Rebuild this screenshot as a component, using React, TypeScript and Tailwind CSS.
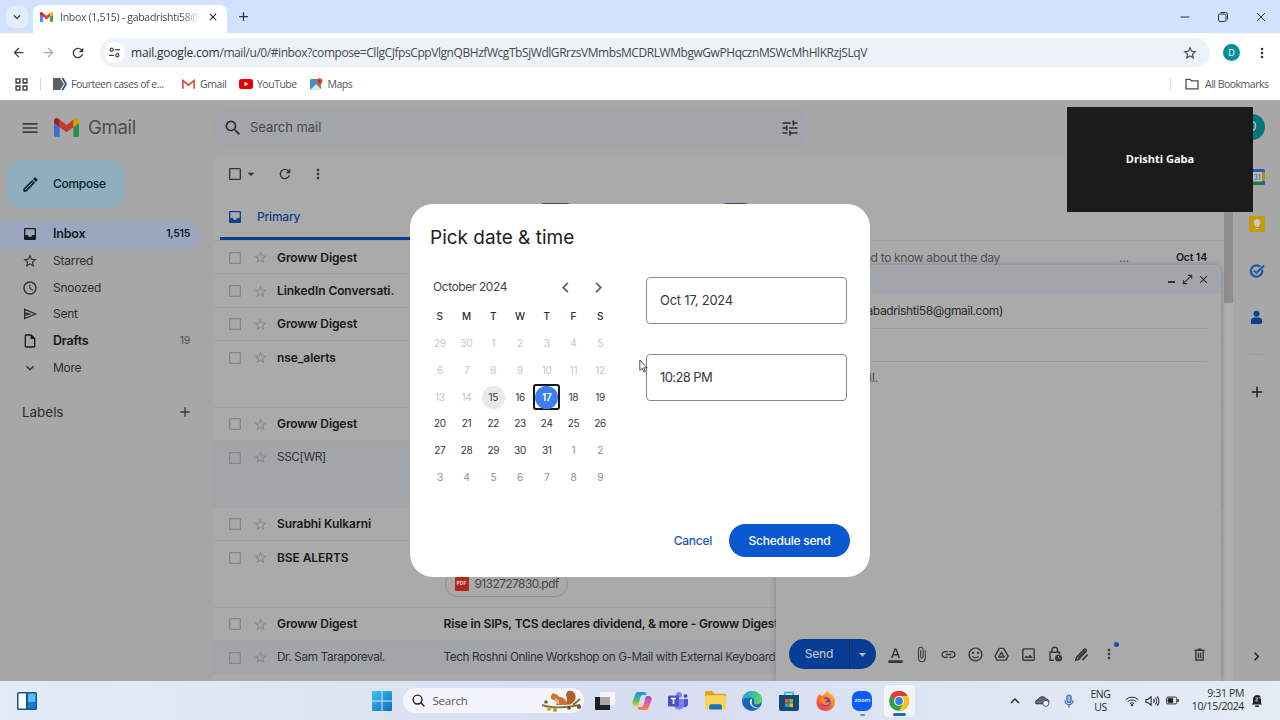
import type { ReactNode } from "react";
import {
  MdAccessTime,
  MdAdd,
  MdArrowBack,
  MdArrowDropDown,
  MdArrowForward,
  MdAttachFile,
  MdCheckBoxOutlineBlank,
  MdChevronLeft,
  MdChevronRight,
  MdClose,
  MdExpandMore,
  MdFormatColorText,
  MdInsertLink,
  MdMenu,
  MdMoreVert,
  MdOutlineImage,
  MdOutlineInsertDriveFile,
  MdOutlineModeEdit,
  MdRefresh,
  MdSearch,
  MdSentimentSatisfiedAlt,
  MdStarBorder,
  MdTune,
} from "react-icons/md";

const folders = [
  { name: "Inbox", count: "1,515", icon: InboxIcon, active: true, bold: true },
  { name: "Starred", count: "", icon: MdStarBorder, active: false, bold: false },
  { name: "Snoozed", count: "", icon: MdAccessTime, active: false, bold: false },
  { name: "Sent", count: "", icon: SentIcon, active: false, bold: false },
  { name: "Drafts", count: "19", icon: MdOutlineInsertDriveFile, active: false, bold: true },
  { name: "More", count: "", icon: MdExpandMore, active: false, bold: false },
];

type Mail = {
  from: string;
  unread: boolean;
  tall?: boolean;
  subject?: string;
  tail?: string;
  date?: string;
  file?: string;
};

const mails: Mail[] = [
  { from: "Groww Digest", unread: true, tail: "All you need to know about the day", date: "Oct 14" },
  { from: "LinkedIn Conversati.", unread: true },
  { from: "Groww Digest", unread: true },
  { from: "nse_alerts", unread: true, tall: true },
  { from: "Groww Digest", unread: true },
  { from: "SSC[WR]", unread: false, tall: true },
  { from: "Surabhi Kulkarni", unread: true },
  { from: "BSE ALERTS", unread: true, tall: true, file: "9132727830.pdf" },
  { from: "Groww Digest", unread: true, subject: "Rise in SIPs, TCS declares dividend, & more - Groww Digest" },
  { from: "Dr. Sam Taraporeval.", unread: false, subject: "Tech Roshni Online Workshop on G-Mail with External Keyboard" },
];

const weekDays = ["S", "M", "T", "W", "T", "F", "S"];
const days = [
  29, 30, 1, 2, 3, 4, 5, 6, 7, 8, 9, 10, 11, 12, 13, 14, 15, 16, 17, 18, 19, 20, 21, 22, 23, 24, 25, 26,
  27, 28, 29, 30, 31, 1, 2, 3, 4, 5, 6, 7, 8, 9,
];

function InboxIcon({ className }: { className?: string }) {
  return (
    <svg viewBox="0 0 24 24" className={className} fill="currentColor">
      <path d="M19 3H5a2 2 0 0 0-2 2v14a2 2 0 0 0 2 2h14a2 2 0 0 0 2-2V5a2 2 0 0 0-2-2zm0 10.500h-4a3 3 0 0 1-6 0H5V5h14z" />
    </svg>
  );
}

function SentIcon({ className }: { className?: string }) {
  return (
    <svg viewBox="0 0 24 24" className={className} fill="none" stroke="currentColor" strokeWidth="2">
      <path d="M4 5.2 20.2 12 4 18.8z M4 9.8l7 2.2-7 2.2" />
    </svg>
  );
}

function GmailLogo({ className }: { className: string }) {
  return (
    <svg viewBox="52 42 88 66" className={className}>
      <path fill="#4285f4" d="M58 108h14V74L52 59v43c0 3.320 2.690 6 6 6" />
      <path fill="#34a853" d="M120 108h14c3.320 0 6-2.690 6-6V59l-20 15" />
      <path fill="#fbbc04" d="M120 48v26l20-15v-8c0-7.420-8.470-11.650-14.400-7.200" />
      <path fill="#ea4335" d="M72 74V48l24 18 24-18v26L96 92" />
      <path fill="#c5221f" d="M52 51v8l20 15V48l-5.600-4.200c-5.940-4.450-14.400-.22-14.400 7.200" />
    </svg>
  );
}

function TabStrip() {
  return (
    <div className="flex h-[33px] bg-[#d3e2fc]">
      <div className="flex w-[33px] items-center justify-end">
        <div className="mr-[5px] flex size-[22px] items-center justify-center rounded-[7px] bg-[#e3edfd]">
          <MdExpandMore className="size-[14px] text-[#1f1f1f]" />
        </div>
      </div>
      <div className="mt-[5px] flex w-[194px] items-center rounded-t-[8px] bg-white pl-[7px] pb-[4px]">
        <GmailLogo className="h-[10px] w-[13px] shrink-0" />
        <span className="ml-[7px] w-[142px] whitespace-nowrap bg-linear-to-r from-[#3c4043] from-85% to-[#e8e8e8] to-97% bg-clip-text pt-px text-[10.500px] tracking-[-0.3px] text-transparent">
          Inbox (1,515) - gabadrishti58@
        </span>
        <MdClose className="ml-[5px] size-[12px] text-[#1f1f1f]" />
      </div>
      <MdAdd className="mt-[9px] ml-[9px] size-[15px] text-[#30343a]" />
      <div className="ml-auto flex items-center gap-[26px] pr-[13px]">
        <svg viewBox="0 0 12 12" className="size-[12px]" stroke="#333" fill="none">
          <path d="M1.500 6h9" />
        </svg>
        <svg viewBox="0 0 12 12" className="size-[12px]" stroke="#333" fill="none">
          <rect x="1.500" y="3" width="7.500" height="7.500" rx="1.500" />
          <path d="M3.500 1.500h5a2 2 0 0 1 2 2v5" />
        </svg>
        <svg viewBox="0 0 12 12" className="size-[12px]" stroke="#333" fill="none">
          <path d="m2 2 8 8M10 2l-8 8" />
        </svg>
      </div>
    </div>
  );
}

function AddressBar() {
  return (
    <div className="flex h-[39px] items-center bg-white">
      <MdArrowBack className="ml-[11px] size-[15px] text-[#3c4043]" />
      <MdArrowForward className="ml-[15px] size-[15px] text-[#a5a8ab]" />
      <MdRefresh className="ml-[14px] size-[16px] text-[#3c4043]" />
      <div className="ml-[14px] flex h-[29px] w-[1110px] items-center rounded-full bg-[#edf1f9] pl-[4px]">
        <div className="flex size-[21px] items-center justify-center rounded-full bg-white">
          <svg viewBox="0 0 14 14" className="size-[13px]" fill="none" stroke="#3c4043" strokeWidth="1.300">
            <circle cx="4" cy="4" r="1.700" />
            <path d="M7.500 4H13M1 10h5.500" />
            <circle cx="10" cy="10" r="1.700" />
          </svg>
        </div>
        <span className="ml-[6px] pt-px whitespace-nowrap text-[12px] tracking-[-0.440px] text-[#45484c]">
          <span className="tracking-[-0.2px] text-[#2b2d30]">mail.google.com</span>/mail/u/0/#inbox?compose=CllgCJfpsCppVlgnQBHzfWcgTbSjWdlGRrzsVMmbsMCDRLWMbgwGwPHqcznMSWcMhHlKRzjSLqV
        </span>
        <MdStarBorder className="mr-[12px] ml-auto size-[16px] text-[#3c4043]" />
      </div>
      <div className="ml-[13px] flex size-[17px] items-center justify-center rounded-full bg-[#0b8f95] text-[9px] text-white">D</div>
      <MdMoreVert className="ml-[14px] size-[16px] text-[#303134]" />
    </div>
  );
}

function Bookmarks() {
  return (
    <div className="flex h-[28px] items-center bg-white pb-[4px] text-[10.500px] tracking-[-0.5px] whitespace-nowrap text-[#53575b]">
      <svg viewBox="0 0 12 12" className="ml-[15px] size-[13px]" fill="none" stroke="#4a4d50" strokeWidth="1.400">
        <path d="M1 1h3.500v3.500H1zM7.500 1H11v3.500H7.500zM1 7.500h3.500V11H1zM7.500 7.500H11V11H7.500z" />
      </svg>
      <div className="ml-[12px] h-[13px] w-px bg-[#cbdcf8]" />
      <svg viewBox="0 0 14 12" className="ml-[12px] h-[12px] w-[14px]">
        <path fill="#5b6067" d="M0 0h7l4 6-4 6H0z" />
        <path fill="#1d4f8c" d="M8.500 0h2L14 6l-3.500 6h-2L12 6z" />
      </svg>
      <span className="ml-[4px] w-[93px] pt-px">Fourteen cases of e...</span>
      <svg viewBox="0 0 14 10" className="ml-[18px] h-[10px] w-[13px]" fill="none" stroke="#d9453d" strokeWidth="1.700">
        <path d="M1 10V1.200l6 5 6-5V10" />
      </svg>
      <span className="ml-[5px] w-[25px] pt-px tracking-[-0.4px]">Gmail</span>
      <svg viewBox="0 0 14 10" className="ml-[14px] h-[10px] w-[14px]">
        <rect width="14" height="10" rx="2.500" fill="#e60000" />
        <path fill="#fff" d="M5.500 2.700v4.600L9.500 5z" />
      </svg>
      <span className="ml-[4px] w-[39px] pt-px">YouTube</span>
      <svg viewBox="0 0 13 13" className="ml-[14px] size-[13px]">
        <rect y="1" width="11" height="11" rx="1.500" fill="#34a853" />
        <path d="M0 12 6 6l5 5v1z" fill="#dfe5ea" />
        <path d="m3 1 4 4-7 6V6z" fill="#4285f4" />
        <path d="M6.500 3.200a3 3 0 1 1 6 0c0 2-2.400 2.800-3 5.300-.6-2.500-3-3.300-3-5.300" fill="#ea4335" />
        <circle cx="9.500" cy="3.200" r="1" fill="#8c1d18" />
      </svg>
      <span className="ml-[4.500px] pt-px">Maps</span>
      <div className="ml-auto h-[13px] w-px bg-[#cbdcf8]" />
      <svg viewBox="0 0 14 12" className="ml-[14px] h-[12px] w-[14px]" fill="none" stroke="#4a4d50" strokeWidth="1.300">
        <path d="M1 1.300h4l1.500 1.500H13v8H1z" />
      </svg>
      <span className="mr-[12px] ml-[6px] w-[63px] pt-px">All Bookmarks</span>
    </div>
  );
}

function Sidebar() {
  return (
    <div className="flex w-[213px] shrink-0 flex-col text-[#2c2e31]">
      <div className="flex h-[55px] items-center">
        <MdMenu className="ml-[20px] size-[20px] text-[#3b3d40]" />
        <GmailLogo className="ml-[14px] h-[19px] w-[25px] brightness-[.85]" />
        <span className="ml-[9px] text-[18.500px] tracking-[-0.3px] text-[#4a4c4f]">Gmail</span>
      </div>
      <div className="mt-[6px] ml-[7px] flex h-[46px] w-[118px] items-center rounded-[12px] bg-[#8fafbe] text-[#0d1d2b]">
        <MdOutlineModeEdit className="ml-[14px] size-[19px]" />
        <span className="ml-[13px] text-[12px] font-medium tracking-[-0.3px]">Compose</span>
      </div>
      <div className="mt-[14px] flex w-[200px] flex-col">
        {folders.map((f) => (
          <div
            key={f.name}
            className={`flex h-[26.670px] items-center pr-[10px] ${f.active ? "rounded-r-full bg-[#9aa8bf] text-[#0d1726]" : ""} ${f.bold ? "text-[12.500px] font-semibold tracking-[-0.2px] text-[#17191c]" : "text-[12px] tracking-[-0.25px]"}`}
          >
            <f.icon className="ml-[22px] size-[16px]" />
            <span className="ml-[15px]">{f.name}</span>
            <span className={`ml-auto text-[10.500px] tracking-[-0.3px] ${f.active ? "" : "font-normal text-[#4c4e51]"}`}>{f.count}</span>
          </div>
        ))}
      </div>
      <div className="mt-[21px] flex w-[200px] items-center text-[13.500px] tracking-[-0.05px]">
        <span className="ml-[22px]">Labels</span>
        <MdAdd className="mr-[7px] ml-auto size-[16px] text-[#35373a]" />
      </div>
    </div>
  );
}

function MailRow({ mail }: { mail: Mail }) {
  return (
    <div
      className={`flex border-b border-[#a1a2a3] pl-[14px] ${mail.tall ? "h-[66.670px]" : "h-[33.330px]"} ${mail.unread ? "text-[12px] font-semibold tracking-[-0.08px] text-[#17181a]" : "bg-[#a3a6a9] text-[11.800px] tracking-[-0.4px] text-[#303235]"}`}
    >
      <div className="flex h-[33.500px] w-[216.500px] shrink-0 items-center">
        <MdCheckBoxOutlineBlank className="size-[16px] text-[#858789]" />
        <MdStarBorder className="ml-[9.500px] size-[15px] text-[#858789]" />
        <span className="ml-[9.500px] whitespace-nowrap">{mail.from}</span>
      </div>
      {mail.subject && (
        <div className={`flex h-[33.500px] items-center whitespace-nowrap ${mail.unread ? "tracking-[-0.15px]" : "tracking-[-0.42px]"}`}>
          {mail.subject}
        </div>
      )}
      {mail.file && (
        <div className="mt-[30px] ml-[1px] flex h-[26px] w-[123px] items-center rounded-full border border-[#8e9092] pl-[9px] font-normal text-[#46484b]">
          <span className="flex size-[14px] items-center justify-center rounded-[1px] bg-[#b3261e] text-[5px] font-bold tracking-normal text-[#ddd]">PDF</span>
          <span className="ml-[6px] text-[12px] tracking-[-0.6px]">{mail.file}</span>
        </div>
      )}
      {mail.tail && (
        <div className="ml-auto flex h-[33px] items-center font-normal tracking-[-0.32px] text-[#4a4c4f]">
          <span>{mail.tail}</span>
          <span className="ml-[119px] w-[57px] tracking-normal">...</span>
          <span className="mr-[17px] text-[10.500px] font-semibold tracking-[-0.15px] text-[#17181a]">{mail.date}</span>
        </div>
      )}
    </div>
  );
}

function MailList() {
  return (
    <div className="flex w-[1020px] shrink-0 flex-col">
      <div className="flex h-[55px] shrink-0 items-center">
        <div className="flex h-[38px] w-[597px] items-center rounded-full bg-[#a2a6aa]">
          <MdSearch className="ml-[10px] size-[20px] text-[#2c2e31]" />
          <span className="ml-[7px] text-[13px] tracking-[-0.05px] text-[#45484b]">Search mail</span>
          <MdTune className="mr-[10px] ml-auto size-[20px] text-[#2c2e31]" />
        </div>
      </div>
      <div className="flex min-h-0 flex-1">
        <div className="w-[1011px] shrink-0 overflow-hidden rounded-tl-[10px] bg-[#aaaaaa]">
          <div className="flex h-[38px] items-center text-[#333538]">
            <MdCheckBoxOutlineBlank className="ml-[14px] size-[16px]" />
            <MdArrowDropDown className="size-[16px]" />
            <MdRefresh className="ml-[18px] size-[16px]" />
            <MdMoreVert className="ml-[17px] size-[16px]" />
          </div>
          <div className="flex h-[48px] border-b border-[#a1a2a3]">
            <div className="ml-[7px] flex w-[200px] items-center border-b-3 border-[#0b3e8f] pt-[4px] text-[#123f8c]">
              <InboxIcon className="ml-[7px] size-[16px]" />
              <span className="ml-[14px] text-[12px] font-medium tracking-[-0.2px]">Primary</span>
            </div>
            <div className="mt-[10px] ml-[121px] h-[12px] w-[29px] rounded-[3px] bg-[#34506e]" />
            <div className="mt-[10px] ml-[153px] h-[12px] w-[25px] rounded-[3px] bg-[#2b4c8c]" />
          </div>
          {mails.map((m, i) => (
            <MailRow key={i} mail={m} />
          ))}
        </div>
        <div className="w-[9px] bg-[#aeaeaf]">
          <div className="h-[148px] bg-[#8e8e8f]" />
        </div>
      </div>
    </div>
  );
}

function AppRail() {
  return (
    <div className="flex flex-1 flex-col items-center text-[#1c1d1f]">
      <div className="mt-[14px] ml-[6px] flex size-[26px] items-center justify-center self-start rounded-full bg-[#05777c] text-[13px] text-[#ccc]">D</div>
      <svg viewBox="0 0 16 16" className="mt-[29px] size-[16px]">
        <rect width="16" height="16" rx="1.500" fill="#2c5cb0" />
        <path fill="#b88d0b" d="M12 3h4v9h-4z" />
        <path fill="#1f7a3c" d="M0 12h13v4H1.500z" />
        <path fill="#b9bcc0" d="M3 3h10v9.500H3z" />
        <text x="8" y="10.500" fontSize="7" textAnchor="middle" fill="#2c5cb0">31</text>
      </svg>
      <svg viewBox="0 0 16 16" className="mt-[31px] size-[16px]">
        <rect width="16" height="16" rx="1.500" fill="#c79a08" />
        <path fill="#c9c9c6" d="M8 3a3.500 3.500 0 0 0-1.700 6.500V11h3.400V9.500A3.500 3.500 0 0 0 8 3M6.500 12h3v1h-3z" />
      </svg>
      <svg viewBox="0 0 16 16" className="mt-[31px] size-[16px]" fill="none">
        <circle cx="7.500" cy="8" r="5.700" stroke="#1c57ad" strokeWidth="2.300" />
        <path d="m5 7.500 2.400 2.400 6.800-7" stroke="#a7a9ac" strokeWidth="3.500" />
        <path d="m5 7.500 2.400 2.400L15 2.500" stroke="#1c57ad" strokeWidth="2" />
      </svg>
      <svg viewBox="0 0 14 16" className="mt-[31px] h-[15px] w-[13px]" fill="#0c3f93">
        <circle cx="7" cy="4" r="3.200" />
        <path d="M1 15v-3a4 4 0 0 1 4-4h4a4 4 0 0 1 4 4v1.500a1.500 1.500 0 0 1-1.500 1.500z" />
      </svg>
      <div className="mt-[29px] h-px w-[14px] bg-[#999b9e]" />
      <MdAdd className="mt-[28px] size-[18px]" />
      <MdChevronRight className="mt-auto mb-[16px] size-[17px]" />
    </div>
  );
}

function ToolIcon({ children }: { children: ReactNode }) {
  return <div className="relative flex w-[26.670px] items-center justify-center">{children}</div>;
}

function ComposeWindow() {
  return (
    <div className="absolute top-[165px] left-[776px] flex h-[416px] w-[445px] flex-col rounded-t-[7px] bg-[#aaaaaa] text-[#2a2c2e] shadow-[0_0_6px_#808285]">
      <div className="flex h-[29px] items-center justify-end rounded-t-[7px] bg-[#a2a6aa] pr-[11px] pb-px">
        <div className="mt-[5px] h-[2px] w-[7px] bg-[#333]" />
        <svg viewBox="0 0 12 12" className="ml-[7px] size-[11px]" stroke="#333" strokeWidth="1.300" fill="none">
          <path d="m2 10 8-8M6.500 1.500h4v4M1.500 6.500v4h4" />
        </svg>
        <MdClose className="ml-[4px] size-[13px] text-[#333]" />
      </div>
      <div className="mx-[14px] flex h-[35px] items-center border-b border-[#9a9b9d] text-[12px] tracking-[-0.38px]">
        <span className="w-[213px] whitespace-nowrap text-right">Drishti (gabadrishti58@gmail.com)</span>
      </div>
      <div className="mx-[14px] h-[33px] border-b border-[#9a9b9d]" />
      <div className="mx-[14px] mt-[8px] flex-1 text-[11.500px] text-[#404244]">
        <div className="w-[88px] text-right whitespace-nowrap">Scheduled mail.</div>
      </div>
      <div className="mb-[12px] flex h-[30px] items-center pl-[13px]">
        <div className="flex h-[30px] w-[87px] shrink-0 items-center rounded-full bg-[#073d94] text-[12px] font-medium tracking-[-0.2px] text-[#b4bccb]">
          <span className="w-[60px] text-center">Send</span>
          <div className="flex h-full flex-1 items-center border-l border-[#0a2c66] pl-[4px]">
            <MdArrowDropDown className="size-[17px]" />
          </div>
        </div>
        <div className="ml-[6px] flex flex-1 items-center text-[#36383a]">
          <ToolIcon><MdFormatColorText className="size-[17px]" /></ToolIcon>
          <ToolIcon><MdAttachFile className="size-[17px]" /></ToolIcon>
          <ToolIcon><MdInsertLink className="size-[17px]" /></ToolIcon>
          <ToolIcon><MdSentimentSatisfiedAlt className="size-[17px]" /></ToolIcon>
          <ToolIcon>
            <svg viewBox="0 0 16 16" className="size-[15px]" fill="none" stroke="currentColor" strokeWidth="1.500" strokeLinejoin="round">
              <path d="M5.700 1.500h4.600L15 9.700 12.700 14H3.300L1 9.700z" />
              <path d="m8 5.700 2.900 4.900H5.100z" />
            </svg>
          </ToolIcon>
          <ToolIcon><MdOutlineImage className="size-[17px]" /></ToolIcon>
          <ToolIcon>
            <svg viewBox="0 0 16 16" className="size-[16px]" fill="none" stroke="currentColor" strokeWidth="1.500">
              <path d="M7 14.200H3V6.300h9.500V8M5 6V4a2.700 2.700 0 0 1 5.500 0v2" />
              <circle cx="11.500" cy="12" r="3.500" fill="currentColor" stroke="none" />
              <path d="M11.500 10v2l1.300.8" stroke="#ababab" strokeWidth=".9" />
            </svg>
          </ToolIcon>
          <ToolIcon>
            <svg viewBox="0 0 16 16" className="size-[15px]" fill="none" stroke="currentColor" strokeWidth="1.700">
              <path d="M2 14l.7-3L11 2.500c1-.9 2.800.8 1.900 1.900L5 13z" />
              <path d="M4.500 11.500 12 4M9 14l5.500-6" />
            </svg>
          </ToolIcon>
          <ToolIcon>
            <MdMoreVert className="size-[16px]" />
            <span className="absolute -top-[4px] right-[3px] size-[5px] rounded-full bg-[#174fa8]" />
          </ToolIcon>
          <svg viewBox="0 0 12 14" className="mr-[16px] ml-auto h-[13px] w-[11px]" fill="none" stroke="currentColor" strokeWidth="1.500">
            <path d="M.5 2.300h11M4 1.200h4M2 3v10h8V3M4.800 5v6M7.200 5v6" />
          </svg>
        </div>
      </div>
    </div>
  );
}

function Calendar() {
  const dayClass = (i: number) => {
    if (i === 18) return "text-white font-semibold";
    if (i < 16) return "text-[#c4c6c8]";
    if (i > 32) return "text-[#8d9093]";
    return "text-[#333538]";
  };
  return (
    <div className="w-[187px]">
      <div className="flex h-[27px] items-center pl-[6.500px] text-[12px] tracking-[-0.42px] text-[#444749]">
        <span className="pb-px">October 2024</span>
        <MdChevronLeft className="ml-auto size-[21px] text-[#5b5e61]" />
        <MdChevronRight className="mr-[5px] ml-[12px] size-[21px] text-[#5b5e61]" />
      </div>
      <div className="mt-[3px] grid grid-cols-7 text-[10px]">
        {weekDays.map((d, i) => (
          <div key={i} className="flex h-[26.670px] items-center justify-center pb-px font-medium text-[#2b2d30]">{d}</div>
        ))}
        {days.map((d, i) => (
          <div
            key={i}
            className={`flex h-[26.670px] items-center justify-center tracking-[-0.3px] ${dayClass(i)} ${i === 18 ? "rounded-[3px] border-2 border-[#15171a]" : ""}`}
          >
            <span
              className={`flex size-[23px] shrink-0 items-center justify-center rounded-full ${i === 18 ? "bg-[#3d7ff0]" : ""} ${i === 16 ? "bg-[#e9e9e9]" : ""}`}
            >
              {d}
            </span>
          </div>
        ))}
      </div>
    </div>
  );
}

function ScheduleDialog() {
  return (
    <div className="absolute top-[104px] left-[410px] flex h-[373px] w-[460px] flex-col rounded-[23px] bg-white">
      <h2 className="mt-[21px] ml-[20px] text-[19px] leading-[26px] text-[#1f2124]">Pick date &amp; time</h2>
      <div className="flex">
        <div className="mt-[22.800px] ml-[16.500px]">
          <Calendar />
        </div>
        <div className="mt-[26px] ml-[32.500px] flex flex-col gap-[30px] text-[13px] tracking-[-0.25px] text-[#36383b]">
          <div className="flex h-[47px] w-[201px] items-center rounded-[4px] border border-[#868a8e] pl-[13px]">Oct 17, 2024</div>
          <div className="flex h-[47px] w-[201px] items-center rounded-[4px] border border-[#868a8e] pl-[13px] tracking-[-0.6px]">10:28 PM</div>
        </div>
      </div>
      <div className="mt-auto mr-[20px] mb-[20px] flex items-center justify-end pt-[1px] text-[12px] font-medium tracking-[-0.25px]">
        <span className="mr-[17px] text-[#1a56b8]">Cancel</span>
        <button className="h-[33px] w-[121px] rounded-full bg-[#0b57d0] pt-px text-white">Schedule send</button>
      </div>
    </div>
  );
}

function TaskItem({ children }: { children: ReactNode }) {
  return <div className="relative flex h-full w-[36.800px] items-center justify-center">{children}</div>;
}

function Taskbar() {
  return (
    <div className="flex h-[39px] items-center bg-linear-to-r from-[#e2ecf6] via-[#d7ddf1] via-50% to-[#e4edf6] text-[#27292c]">
      <svg viewBox="0 0 20 18" className="ml-[17px] h-[18px] w-[20px]">
        <rect width="20" height="18" rx="1.500" fill="#14578f" />
        <path fill="#fff" d="M1.500 1.500H9v15H1.500z" />
        <path fill="#4cc0f5" d="M11 1.500h7.500V10H11z" />
        <path fill="#1779cf" d="M11 10h7.500v6.500H11z" />
      </svg>
      <svg viewBox="0 0 20 20" className="ml-[335px] size-[20px]">
        <defs>
          <linearGradient id="win" x1="0" y1="0" x2="1" y2="1">
            <stop offset="0" stopColor="#3fc0f0" />
            <stop offset="1" stopColor="#0b6fc4" />
          </linearGradient>
        </defs>
        <path fill="url(#win)" d="M1 0h8.500v9.500H0V1a1 1 0 0 1 1-1m9.500 0H19a1 1 0 0 1 1 1v8.500h-9.500zM0 10.500h9.500V20H1a1 1 0 0 1-1-1zm10.500 0H20V19a1 1 0 0 1-1 1h-8.500z" />
      </svg>
      <div className="ml-[11px] flex h-[25px] w-[181px] items-center rounded-full bg-[#f2f6fc] text-[11.500px] tracking-[-0.2px] text-[#54575b]">
        <svg viewBox="0 0 14 14" className="ml-[9px] size-[13px]" fill="none" stroke="#1f2124" strokeWidth="1.500">
          <circle cx="6" cy="6" r="4.800" />
          <path d="m9.500 9.500 3.800 3.800" />
        </svg>
        <span className="ml-[7.500px]">Search</span>
        <svg viewBox="0 0 42 22" className="mr-[1px] ml-auto h-[22px] w-[42px]">
          <path d="M1 15c8 3 22 3 38 0M32 15l7-6" stroke="#6f7d3c" strokeWidth="2" fill="none" />
          <path d="M24 13c4-2 1-6 1-8 0-5 7-6 9-1 2 5-1 10-7 11z" fill="#b5602c" />
          <path d="M10 7c0-2 1-3 2-4l2 1c3 0 3 3 5 3 4 0 7 4 7 8H15c2-3 0-4-2-5-2 0-3-1-3-3" fill="#cc7435" />
          <path d="M14 9c3 1 4 3 3 5" stroke="#f0c59b" strokeWidth="1.500" fill="none" />
          <circle cx="5" cy="12" r="1.800" fill="#7a5a20" />
          <circle cx="8" cy="19" r="2" fill="#d9a520" />
          <circle cx="14" cy="20" r="2" fill="#c89020" />
          <circle cx="28" cy="18" r="1.800" fill="#8a3d22" />
          <circle cx="38" cy="17" r="2" fill="#a33b2b" />
        </svg>
      </div>
      <div className="ml-[2.500px] flex h-full items-center">
        <TaskItem>
          <svg viewBox="0 0 20 20" className="size-[20px]">
            <rect x="5" y="1" width="15" height="13" rx="1" fill="#f5f5f5" />
            <path d="M0 6h15v13H1a1 1 0 0 1-1-1z" fill="#1e1f21" />
            <path d="M5 6h10v8H5z" fill="#aaa" />
          </svg>
        </TaskItem>
        <TaskItem>
          <svg viewBox="0 0 20 20" className="size-[20px]">
            <defs>
              <linearGradient id="cpl" x1="0" y1="0" x2="0" y2="1">
                <stop offset="0" stopColor="#1a8fe8" />
                <stop offset=".6" stopColor="#4fc46a" />
                <stop offset="1" stopColor="#f2c41f" />
              </linearGradient>
              <linearGradient id="cpr" x1="0" y1="0" x2="0" y2="1">
                <stop offset="0" stopColor="#8a4be8" />
                <stop offset=".5" stopColor="#ef5d9a" />
                <stop offset="1" stopColor="#f58a3c" />
              </linearGradient>
            </defs>
            <path fill="url(#cpl)" d="M6 1h6c2 0 2 1 2.500 3H11C9 4 8.500 6 8 8l-1.500 5.500C6 15 5 15 3.500 15 1 15 0 13 .5 11L3 4c.5-2 1.500-3 3-3" />
            <path fill="url(#cpr)" d="M14 19H8c-2 0-2-1-2.500-3H9c2 0 2.500-2 3-4l1.500-5.500C14 5 15 5 16.500 5c2.500 0 3.500 2 3 4L17 16c-.5 2-1.500 3-3 3" />
          </svg>
        </TaskItem>
        <TaskItem>
          <svg viewBox="0 0 20 20" className="size-[20px]">
            <circle cx="11" cy="4" r="3" fill="#7b83eb" />
            <circle cx="17.500" cy="5" r="2" fill="#5059c9" />
            <path d="M13 8h7v5a3.500 3.500 0 0 1-5 3z" fill="#5059c9" />
            <path d="M6 8h10v5a5 5 0 0 1-10 1z" fill="#7b83eb" />
            <rect y="4.500" width="11" height="11" rx="1" fill="#4b53bc" />
            <path d="M3 7.500h5M5.500 7.500v5.500" stroke="#fff" strokeWidth="1.500" />
          </svg>
        </TaskItem>
        <TaskItem>
          <svg viewBox="0 0 20 20" className="size-[21px]">
            <path d="M0 2.500A1.500 1.500 0 0 1 1.500 1H7l2 2.500h9.500A1.500 1.500 0 0 1 20 5v4H0z" fill="#e0a21b" />
            <rect y="5" width="20" height="13.500" rx="1.500" fill="#fbd357" />
            <path d="M4 18.500V15a1.500 1.500 0 0 1 1.500-1.500h9A1.500 1.500 0 0 1 16 15v3.500z" fill="#1574c0" />
          </svg>
        </TaskItem>
        <TaskItem>
          <svg viewBox="0 0 20 20" className="size-[20px]">
            <defs>
              <linearGradient id="edg" x1="0" y1="0" x2="1" y2=".3">
                <stop offset="0" stopColor="#1b9de2" />
                <stop offset="1" stopColor="#55d66b" />
              </linearGradient>
            </defs>
            <circle cx="10" cy="10" r="10" fill="#1566bf" />
            <path d="M0 9.500C.5 4 5 0 10 0c6 0 10 4 10 8.500 0 3-2.500 5-5.500 5-2 0-3-.8-2.500-1.800C13 9 11.500 6.500 8 6.500c-4 0-7 1-8 3" fill="url(#edg)" />
            <path d="M9.500 7.500c-3 2-2 7.500 3 9.500 2 .7 4 .3 5.500-1-1.500 1-7 1-8.200-3.500-.3-1.500.4-2.500.2-3.500z" fill="#dcecf7" />
          </svg>
        </TaskItem>
        <TaskItem>
          <svg viewBox="0 0 20 20" className="size-[20px]">
            <path d="M6 4V1.500h8V4" fill="none" stroke="#35a9e0" strokeWidth="1.500" />
            <path d="M0 4h20v13.500a2.500 2.500 0 0 1-2.500 2.500h-15A2.500 2.500 0 0 1 0 17.500z" fill="#144a78" />
            <path d="M6 8h3.700v3.700H6z" fill="#f05430" />
            <path d="M10.300 8H14v3.700h-3.700z" fill="#7fbb20" />
            <path d="M6 12.300h3.700V16H6z" fill="#20a5ea" />
            <path d="M10.300 12.300H14V16h-3.700z" fill="#fdb913" />
          </svg>
        </TaskItem>
        <TaskItem>
          <svg viewBox="0 0 20 20" className="size-[20px]">
            <defs>
              <linearGradient id="ffx" x1="1" y1="0" x2=".2" y2="1">
                <stop offset="0" stopColor="#ffdd3c" />
                <stop offset=".5" stopColor="#ff7a1f" />
                <stop offset="1" stopColor="#f0305c" />
              </linearGradient>
            </defs>
            <path d="M2 5 4 3l1 2 3-1c1-2 2-3 4-4 0 2 4 3 6 6 2 4 1 8-1 10.500C15 19 12 20 10 20 4 20 .5 16 .5 11c0-2 .5-4 1.500-6" fill="url(#ffx)" />
            <circle cx="10" cy="11" r="4.700" fill="#8035c8" />
            <path d="M4 7c3-1 4 1 6 1s1 2-1 2.500c1 2 4 1.500 5-.5 0 4-4 5-6.500 3.500C5 12 4 9 4 7" fill="#ff8a20" />
          </svg>
        </TaskItem>
        <TaskItem>
          <div className="flex size-[20px] items-center justify-center rounded-[7px] bg-[#0b5cff] text-[6px] font-semibold text-white">zoom</div>
          <span className="absolute bottom-[4px] h-[2px] w-[5px] rounded-full bg-[#84868f]" />
        </TaskItem>
        <TaskItem>
          <div className="flex h-[32px] w-[31px] items-center justify-center rounded-[4px] bg-[#f2f4fa]">
            <svg viewBox="0 0 20 20" className="size-[20px]">
              <circle cx="10" cy="10" r="10" fill="#34a048" />
              <path d="M10 10 1.300 5A10 10 0 0 1 18.700 5z" fill="#e33b2e" />
              <path d="M10 5h8.700A10 10 0 0 1 10 20l4.300-7.500z" fill="#fbc116" />
              <circle cx="10" cy="10" r="5" fill="#fff" />
              <circle cx="10" cy="10" r="3.900" fill="#3b7de8" />
            </svg>
          </div>
          <span className="absolute bottom-[4px] h-[3px] w-[13px] rounded-full bg-[#1670b8]" />
        </TaskItem>
      </div>
      <div className="ml-auto flex items-center">
        <svg viewBox="0 0 10 6" className="h-[6px] w-[10px]" fill="none" stroke="#222" strokeWidth="1.300">
          <path d="m1 5 4-4 4 4" />
        </svg>
        <svg viewBox="0 0 16 12" className="ml-[15px] h-[12px] w-[15px]">
          <path d="M1 9a3 3 0 0 1 2-4.500C5 1 10 0 12 4c3 0 3.500 3 2 5z" fill="#66696d" stroke="#2f3134" />
          <circle cx="11.500" cy="8.500" r="3.200" fill="#f2f5f9" stroke="#3a3c3f" strokeWidth=".9" />
        </svg>
        <svg viewBox="0 0 10 14" className="ml-[14px] h-[14px] w-[10px]" fill="none" stroke="#2a61ad" strokeWidth="1.200">
          <rect x="3" y="1" width="4" height="7.500" rx="2" fill="#9cc3ee" />
          <path d="M1 6.500a4 4 0 0 0 8 0M5 10.500V13.500" />
        </svg>
        <div className="ml-[16px] w-[21px] text-center text-[10.500px] leading-[13px] tracking-[-0.4px]">
          ENG
          <br />
          US
        </div>
        <svg viewBox="0 0 16 12" className="ml-[14px] h-[12px] w-[14px]" fill="none" stroke="#222" strokeWidth="1.100">
          <path d="M1 4.500a10 10 0 0 1 14 0M3.200 6.800a7 7 0 0 1 9.600 0M5.500 9a3.700 3.700 0 0 1 5 0" />
          <circle cx="8" cy="10.700" r=".9" fill="#222" />
        </svg>
        <svg viewBox="0 0 16 12" className="ml-[6px] h-[12px] w-[15px]" fill="none" stroke="#222" strokeWidth="1.100">
          <path d="M1 4.300h2L6.500 1.500v9L3 7.700H1zM9 4a3 3 0 0 1 0 4M11 2.500a5 5 0 0 1 0 7M13 1a7.500 7.500 0 0 1 0 10" />
        </svg>
        <svg viewBox="0 0 14 9" className="ml-[6px] h-[9px] w-[13px]" fill="none" stroke="#222">
          <rect x=".6" y=".8" width="11" height="7.400" rx="1.500" />
          <path d="M2.300 2.500h5v4h-5z" fill="#222" />
          <path d="M13 3v3" strokeWidth="1.500" />
        </svg>
        <div className="ml-[10px] w-[55px] pb-px text-right text-[10.500px] leading-[13px] tracking-[-0.35px] whitespace-nowrap">
          9:31 PM
          <br />
          10/15/2024
        </div>
        <svg viewBox="0 0 12 13" className="mr-[17px] ml-[7px] h-[13px] w-[12px]">
          <path d="M2 9V5a4 4 0 0 1 5-3.800h3V9l1 1.500H.7zM4 11.500h4a2 2 0 0 1-4 0" fill="#202225" />
          <path d="M4.500 4h2.500L4.500 7H7M8.500 1.500h2L8.500 4h2" stroke="#e4edf6" strokeWidth=".8" fill="none" />
        </svg>
      </div>
    </div>
  );
}

export default function App() {
  return (
    <div className="flex h-[720px] w-[1280px] flex-col overflow-hidden bg-white font-['Inter','Liberation_Sans',sans-serif]">
      <div className="font-['Open_Sans','Noto_Sans',sans-serif]">
        <TabStrip />
        <AddressBar />
        <Bookmarks />
      </div>
      <div className="relative flex h-[581px] overflow-hidden bg-[#a7a7a8]">
        <Sidebar />
        <MailList />
        <AppRail />
        <ComposeWindow />
        <ScheduleDialog />

        {/* meeting thumbnail */}
        <div className="absolute top-[7px] left-[1067px] flex h-[105px] w-[186px] items-center justify-center bg-[#1b1b1b] font-['Open_Sans',sans-serif] text-[11px] font-bold text-white">
          Drishti Gaba
        </div>

        {/* mouse pointer */}
        <svg viewBox="0 0 9 14" className="absolute top-[259px] left-[639px] h-[14px] w-[9px]">
          <path d="M.8 1v10.500l2.400-2.200 1.700 3.800 1.500-.7-1.700-3.600h3.500z" fill="#fff" stroke="#222" strokeWidth=".8" />
        </svg>
      </div>
      <div className="font-['Open_Sans','Noto_Sans',sans-serif]">
        <Taskbar />
      </div>
    </div>
  );
}
